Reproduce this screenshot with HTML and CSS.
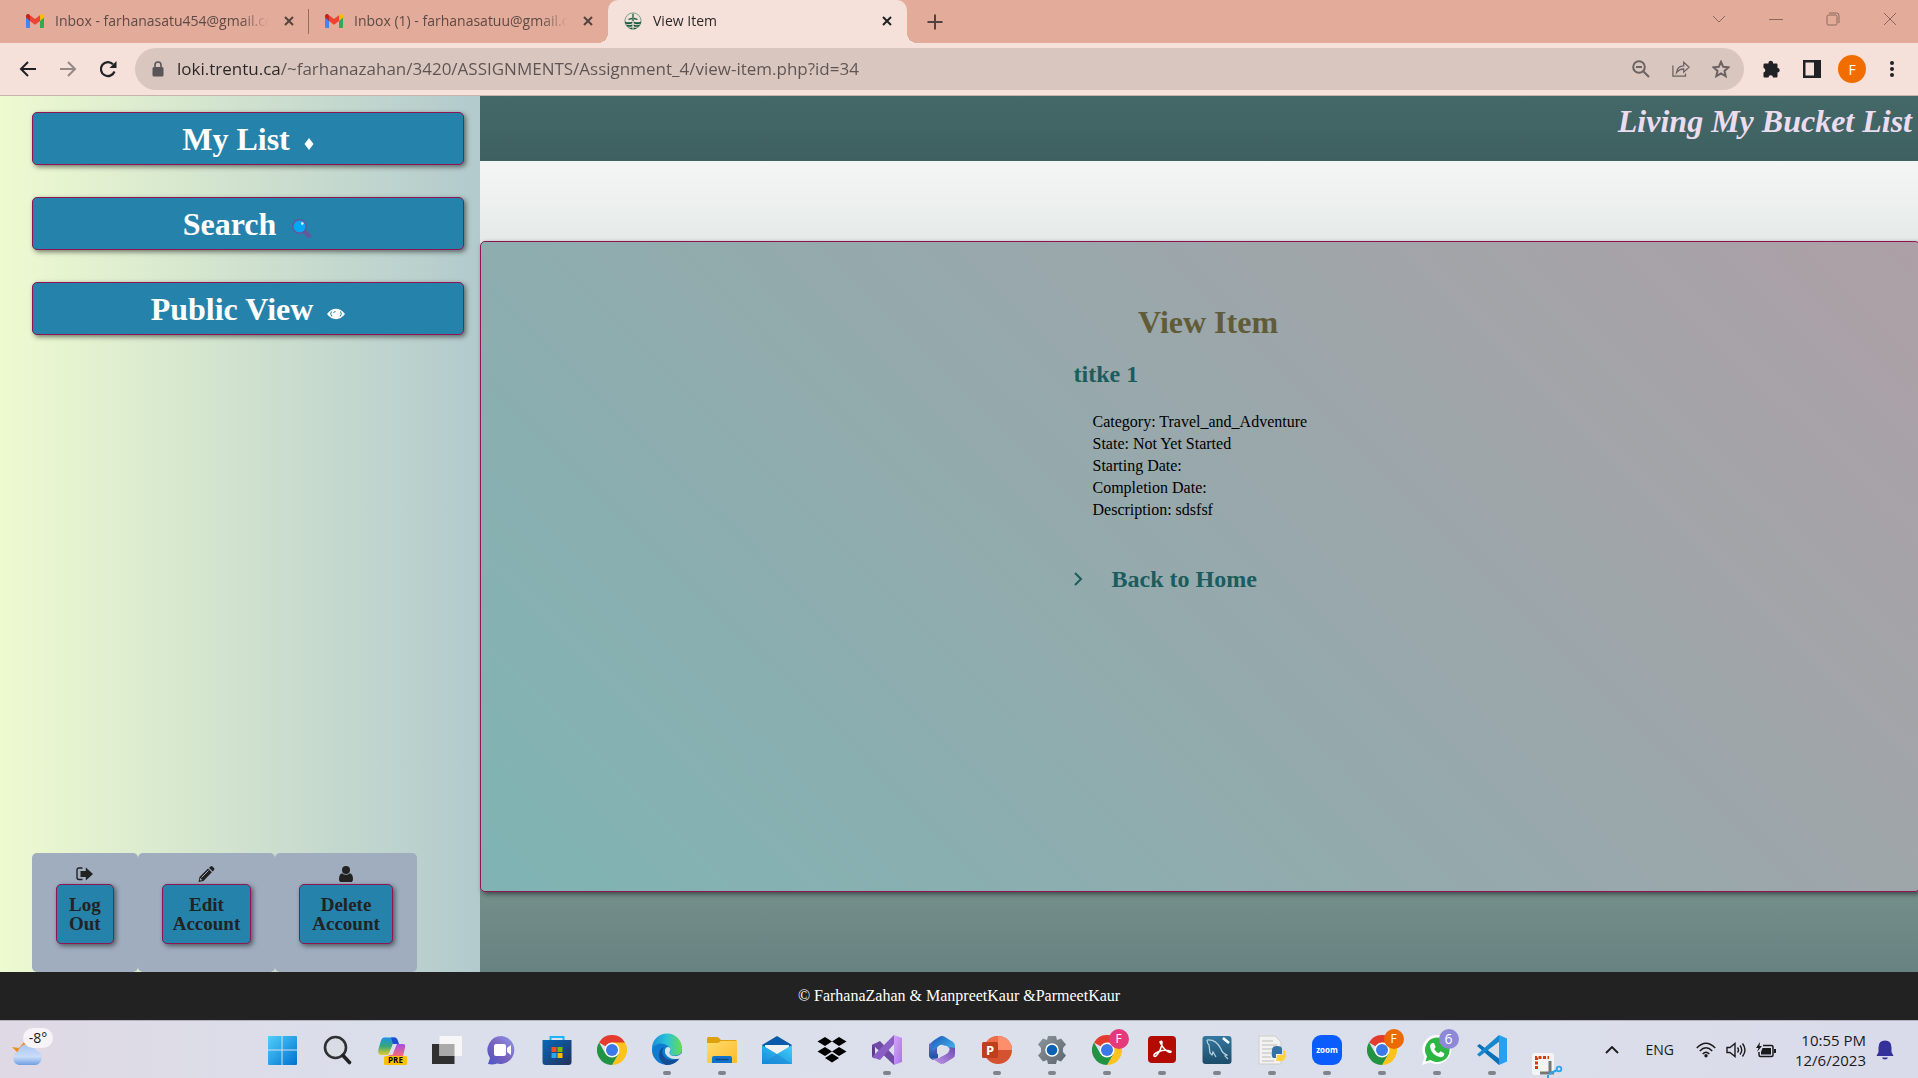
FILE: index.html
```html
<!DOCTYPE html>
<html lang="en">
<head>
<meta charset="utf-8">
<title>View Item</title>
<link rel="stylesheet" href="styles.css">
</head>
<body>
<svg class="defs" width="0" height="0" aria-hidden="true">
  <defs>
    <linearGradient id="gWin" x1="0" y1="0" x2="1" y2="1"><stop offset="0" stop-color="#4fd0fb"/><stop offset="1" stop-color="#0270d0"/></linearGradient>
    <linearGradient id="gChat" x1="0" y1="1" x2="1" y2="0"><stop offset="0" stop-color="#4b54c4"/><stop offset=".5" stop-color="#7b64bd"/><stop offset="1" stop-color="#8f9cf0"/></linearGradient>
    <linearGradient id="gStore" x1="0" y1="0" x2="1" y2="1"><stop offset="0" stop-color="#0669bb"/><stop offset="1" stop-color="#23305a"/></linearGradient>
    <linearGradient id="gEdge" x1="0" y1="0" x2="1" y2="0"><stop offset="0" stop-color="#1690d8"/><stop offset=".5" stop-color="#2cc3d6"/><stop offset="1" stop-color="#66dc50"/></linearGradient>
    <linearGradient id="gFolder" x1="0" y1="0" x2="1" y2="1"><stop offset="0" stop-color="#ffdc6c"/><stop offset="1" stop-color="#fbbb2c"/></linearGradient>
    <linearGradient id="gMail" x1="0" y1="1" x2="1" y2="0"><stop offset="0" stop-color="#1488d8"/><stop offset="1" stop-color="#42cffa"/></linearGradient>
    <linearGradient id="gCop1" x1="0" y1="0" x2="0" y2="1"><stop offset="0" stop-color="#1c90ea"/><stop offset=".5" stop-color="#35a878"/><stop offset="1" stop-color="#e8c92c"/></linearGradient>
    <linearGradient id="gCop2" x1="0" y1="0" x2="0" y2="1"><stop offset="0" stop-color="#a250e8"/><stop offset="1" stop-color="#fb6a74"/></linearGradient>
    <linearGradient id="gVs" x1="0" y1="0" x2="1" y2="1"><stop offset="0" stop-color="#d9a1ff"/><stop offset="1" stop-color="#a776e0"/></linearGradient>
    <linearGradient id="gSql" x1="0" y1="0" x2="0" y2="1"><stop offset="0" stop-color="#3578a0"/><stop offset="1" stop-color="#1c4c68"/></linearGradient>
    <linearGradient id="gGear" x1="0" y1="0" x2="1" y2="1"><stop offset="0" stop-color="#8c959b"/><stop offset="1" stop-color="#5c666e"/></linearGradient>
    <linearGradient id="gCloud" x1="0" y1="0" x2="0" y2="1"><stop offset="0" stop-color="#a9c6f4"/><stop offset=".6" stop-color="#c9dcf8"/><stop offset="1" stop-color="#6f9fe4"/></linearGradient>
    <linearGradient id="g365a" x1="0" y1="0" x2="1" y2="1"><stop offset="0" stop-color="#1a56b8"/><stop offset="1" stop-color="#4cc6f6"/></linearGradient>
    <linearGradient id="g365b" x1="0" y1="1" x2="1" y2="0"><stop offset="0" stop-color="#c39bea"/><stop offset="1" stop-color="#6d48b0"/></linearGradient>
    <linearGradient id="g365c" x1="0" y1="0" x2="0" y2="1"><stop offset="0" stop-color="#8a7ad8"/><stop offset="1" stop-color="#0f4fa0"/></linearGradient>
    <symbol id="gmail" viewBox="0 0 18 14"><path fill="#4285f4" d="M0 3v9.700c0 .7.6 1.300 1.300 1.300H4V6z"/><path fill="#34a853" d="M14 14h2.700c.7 0 1.300-.6 1.300-1.300V3l-4 3z"/><path fill="#ea4335" d="M4 7V1.200L9 5l5-3.800V7l-5 3.800z"/><path fill="#c5221f" d="M0 2v1.500L4 7V1.200L3.300.6C2 -.5 0 .4 0 2z"/><path fill="#fbbc04" d="M14 1.200V7l4-3.500V2c0-1.600-2-2.500-3.300-1.400z"/></symbol>
    <symbol id="close" viewBox="0 0 12 12"><path d="M2 2l8 8M10 2l-8 8" stroke="currentColor" stroke-width="2" fill="none"/></symbol>
    <symbol id="chrome" viewBox="0 0 30 30"><path fill="#e33b2e" d="M15 15L2 7.500A15 15 0 0 1 28 7.500z"/><path fill="#fcc31e" d="M15 7.500h13A15 15 0 0 1 15 30l6.500-11.200z"/><path fill="#229342" d="M2 7.500A15 15 0 0 0 15 30l6.500-11.200H8.500z"/><circle cx="15" cy="15" r="7.500" fill="#fff"/><circle cx="15" cy="15" r="6" fill="#3b78e8"/></symbol>
  </defs>
</svg>

<header class="browser">
  <div class="tabstrip">
    <div class="tab tab-first">
      <svg class="favicon" viewBox="0 0 18 14"><use href="#gmail"/></svg>
      <span class="tab-title">Inbox - farhanasatu454@gmail.com</span>
      <button class="tab-close" aria-label="Close tab"><svg viewBox="0 0 12 12"><use href="#close"/></svg></button>
    </div>
    <div class="tab">
      <svg class="favicon" viewBox="0 0 18 14"><use href="#gmail"/></svg>
      <span class="tab-title">Inbox (1) - farhanasatuu@gmail.com</span>
      <button class="tab-close" aria-label="Close tab"><svg viewBox="0 0 12 12"><use href="#close"/></svg></button>
    </div>
    <div class="tab tab-active">
      <svg class="favicon" viewBox="0 0 20 20"><circle cx="10" cy="10" r="9" fill="none" stroke="#6d9c85" stroke-width="1"/><path fill="#12583a" d="M9.300 2h1.400v8H9.300zM5 7.500l4-1v1.500l-4 1zM15 7.500l-4-1v1.500l4 1zM1 10.500q4 2 8.300 0v2q-4 2-8 .2zM19 10.500q-4 2-8.300 0v2q4 2 8 .2zM2.200 14q3.500 1.500 7.100 0v1.700q-2.800 1.400-5.800.3zM17.800 14q-3.500 1.500-7.100 0v1.700q2.800 1.400 5.800.3zM5 17.200q2.200.8 4.300-.2v2.500Q6.500 19 5 17.200zM15 17.200q-2.200.8-4.300-.2v2.500Q13.500 19 15 17.200z"/></svg>
      <span class="tab-title">View Item</span>
      <button class="tab-close" aria-label="Close tab"><svg viewBox="0 0 12 12"><use href="#close"/></svg></button>
    </div>
    <button class="new-tab" aria-label="New tab"><svg viewBox="0 0 16 16" width="16" height="16"><path d="M8 .5v15M.5 8h15" stroke="#4f4240" stroke-width="2"/></svg></button>
    <div class="window-buttons">
      <button aria-label="Search tabs"><svg viewBox="0 0 14 14"><path d="M1 4l6 6 6-6"/></svg></button>
      <button aria-label="Minimize"><svg viewBox="0 0 14 14"><path d="M0 7.500h14"/></svg></button>
      <button aria-label="Restore"><svg viewBox="0 0 14 14"><rect x="1" y="3" width="10" height="10" rx="1.500"/><path d="M3 1h7.500Q13 1 13 3.500V11"/></svg></button>
      <button aria-label="Close window"><svg viewBox="0 0 14 14"><path d="M1 1l12 12M13 1L1 13"/></svg></button>
    </div>
  </div>
  <div class="toolbar">
    <button class="nav-icon" aria-label="Back"><svg viewBox="0 0 18 18"><path d="M17 9H2M9 2L2 9l7 7" fill="none" stroke="#202124" stroke-width="2"/></svg></button>
    <button class="nav-icon" aria-label="Forward"><svg viewBox="0 0 18 18"><path d="M1 9h15M9 2l7 7-7 7" fill="none" stroke="#948987" stroke-width="2"/></svg></button>
    <button class="nav-icon" aria-label="Reload"><svg viewBox="0 0 18 18"><path d="M15.500 11.500A7 7 0 1 1 14 4.200" fill="none" stroke="#202124" stroke-width="2.200"/><path d="M17.500 1v7h-7z" fill="#202124"/></svg></button>
    <div class="omnibox">
      <svg class="lock" viewBox="0 0 12 16"><rect x=".5" y="6" width="11" height="9.500" rx="1.500" fill="#5a5557"/><path d="M3 6.500V4a3 3 0 0 1 6 0v2.500" fill="none" stroke="#5a5557" stroke-width="1.600"/></svg>
      <input class="url" aria-label="Address" value="loki.trentu.ca/~farhanazahan/3420/ASSIGNMENTS/Assignment_4/view-item.php?id=34">
      <button aria-label="Zoom"><svg viewBox="0 0 18 18"><circle cx="7" cy="7" r="5.800"/><path d="M4 7h6M11.500 11.500l5.500 5.500"/></svg></button>
      <button aria-label="Share"><svg viewBox="0 0 20 18"><path d="M1 5v12h14v-3" stroke-width="1.400"/><path d="M5 13q1-7.500 8-7.500V1.500l6 5.500-6 5.500V9q-5 0-8 4z" stroke-width="1.400"/></svg></button>
      <button aria-label="Bookmark"><svg viewBox="0 0 18 18"><path d="M9 1.800l2.200 5 5.300.5-4 3.600 1.200 5.300L9 13.400l-4.700 2.800 1.200-5.300-4-3.600 5.300-.5z"/></svg></button>
    </div>
    <div class="toolbar-end">
      <button aria-label="Extensions"><svg width="18" height="18" viewBox="0 0 18 18"><path fill="#202124" d="M1.500 3.500h4a2.300 2.300 0 1 1 4.500 0h3.500q1 0 1 1V8a2.200 2.200 0 1 1 0 4.400V16.500q0 1-1 1H10a2.200 2.200 0 0 0-4.500 0h-4q-1 0-1-1v-4a2.300 2.300 0 0 0 0-4.500V4.500q0-1 1-1z"/></svg></button>
      <button aria-label="Side panel"><svg width="18" height="18" viewBox="0 0 18 18"><path fill="#202124" fill-rule="evenodd" d="M0 0h18v18H0zM2.500 2.500v13H11v-13z"/></svg></button>
      <button class="avatar" aria-label="Profile">F</button>
      <button aria-label="Menu"><svg width="18" height="18" viewBox="0 0 18 18"><g fill="#202124"><circle cx="9" cy="3" r="2"/><circle cx="9" cy="9" r="2"/><circle cx="9" cy="15" r="2"/></g></svg></button>
    </div>
  </div>
</header>

<div class="page">
  <aside class="sidebar">
    <nav class="main-nav">
      <a href="#list">My List <svg width="10" height="12" viewBox="0 0 10 12"><path fill="#fff" d="M5 0l4.500 6L5 12 .5 6z"/></svg></a>
      <a href="#search" class="wide-gap">Search <svg width="19" height="19" viewBox="0 0 19 19"><path d="M12 12l5 5" stroke="#6a559c" stroke-width="4" stroke-linecap="round"/><circle cx="7.500" cy="7.500" r="6.700" fill="#00a8f3" stroke="#6a559c" stroke-width="1.400"/><circle cx="10.300" cy="4.500" r="1.300" fill="#fff"/></svg></a>
      <a href="#public">Public View <svg width="18" height="12" viewBox="0 0 18 12"><path fill="#fff" d="M0 6Q4 .8 9 .8T18 6q-4 5.200-9 5.200T0 6z"/><path d="M4.500 3.500Q2.500 6 5 8.500M13.500 3.500Q15.500 6 13 8.500M6.500 5Q7 3.500 8.500 3.500" fill="none" stroke="#2583ab"/></svg></a>
    </nav>
    <div class="account">
      <div class="account-cell">
        <svg width="17" height="16" viewBox="0 0 17 16"><path d="M6.500 2H3Q1 2 1 4v7.500q0 2 2 2h3.500" fill="none" stroke="#222" stroke-width="1.400"/><path fill="#222" d="M4.500 5h5.300V1.500L17 8l-7.200 6.500V11H4.500z"/></svg>
        <a href="#logout">Log<br>Out</a>
      </div>
      <div class="account-cell account-edit">
        <svg width="17" height="16" viewBox="0 0 17 16"><path fill="#222" d="M.5 16l1-5L10 2.500 13.800 6.300 5.500 15zM11 1.700L12.500.5q1-.8 2 0l1.500 1.600q.8 1 0 2L14.700 5.400z"/><path d="M3.500 11.500l7-7" stroke="#9fadbf"/><path fill="#9fadbf" d="M2.200 12l2 2-1.800.5-.6-.6z"/></svg>
        <a href="#edit">Edit<br>Account</a>
      </div>
      <div class="account-cell">
        <svg width="14" height="16" viewBox="0 0 14 16"><circle cx="7" cy="4" r="4" fill="#222"/><path fill="#222" d="M3 7.200q4 3 8 0 3 1 3 6 0 2.800-2.500 2.800h-9Q0 16 0 13.200q0-5 3-6z"/></svg>
        <a href="#delete">Delete<br>Account</a>
      </div>
    </div>
  </aside>
  <div class="content">
    <div class="site-title">Living My Bucket List</div>
    <main class="backdrop">
      <section class="panel">
        <div class="item">
          <h1>View Item</h1>
          <h2>titke 1</h2>
          <ul>
            <li>Category: Travel_and_Adventure</li>
            <li>State: Not Yet Started</li>
            <li>Starting Date:</li>
            <li>Completion Date:</li>
            <li>Description: sdsfsf</li>
          </ul>
          <a class="back" href="#home"><svg width="10" height="16" viewBox="0 0 10 16"><path d="M1 2l6 6-6 6" fill="none" stroke="#1b5c5f" stroke-width="2"/></svg>Back to Home</a>
        </div>
      </section>
    </main>
  </div>
</div>
<footer class="site-footer">© FarhanaZahan &amp; ManpreetKaur &amp;ParmeetKaur</footer>

<div class="taskbar">
  <div class="weather">
    <svg width="32" height="36" viewBox="0 0 32 36"><path fill="#f28c1e" d="M0 17l7 1L12 12l6 8-12 3z"/><path fill="url(#gCloud)" d="M7 35a7 7 0 0 1-1-13.500 9.500 9.500 0 0 1 18-1 7.500 7.500 0 0 1 0 14.500z"/></svg>
    <span class="temp">-8°</span>
  </div>
  <div class="apps">
    <button aria-label="Start"><svg viewBox="0 0 30 30"><path fill="url(#gWin)" d="M1 2q0-1 1-1h12.500v13.500H1zM15.500 1H29q1 0 1 1v12.500H15.500zM1 15.500h13.500V30H2q-1 0-1-1zM15.500 15.500H30V29q0 1-1 1H15.500z"/></svg></button>
    <button aria-label="Search"><svg viewBox="0 0 30 30"><circle cx="13.500" cy="12.500" r="10.500" fill="#d8dce4" stroke="#303030" stroke-width="2.600"/><path d="M21 20.500l6.500 7" stroke="#222" stroke-width="3.600" stroke-linecap="round"/></svg></button>
    <button aria-label="Copilot"><svg viewBox="0 0 30 30"><path fill="url(#gCop1)" d="M7 2.500h11L12 20H5q-5 0-3.500-6L4 5.500Q5 2.500 7 2.500z"/><path fill="#1b4fd0" d="M14 2.500h4q2 0 3 3.500l1 3h-6z"/><path fill="url(#gCop2)" d="M20 9h6q3 0 2 4l-2 8H11l4-3z"/><path fill="#dbe0eb" d="M16 9.500h3.500L15.500 20H11z"/><rect x="7" y="21" width="23" height="9" rx="1.500" fill="#fcc200"/><text x="18.500" y="28.300" class="pre">PRE</text></svg></button>
    <button aria-label="Task view"><svg viewBox="0 0 30 30"><path fill="#303030" d="M0 9h22.500v20H0z"/><path fill="#f6f6f6" d="M7.500 1H30v20H7.500z"/><path fill="#aaa" d="M7.500 9h15v12h-15z"/></svg></button>
    <button aria-label="Chat"><svg viewBox="0 0 30 30"><path fill="url(#gChat)" d="M15 1a14 14 0 1 1-5 27.500Q6 30 1 29l2-6A14 14 0 0 1 15 1z"/><rect x="7" y="9" width="12" height="12" rx="2" fill="#fff"/><path fill="#fff" d="M20 13l4-3v10l-4-3z"/></svg></button>
    <button aria-label="Microsoft Store"><svg viewBox="0 0 30 30"><path d="M8.500 6V2h13v4" fill="none" stroke="#1cb4f4" stroke-width="2"/><path fill="url(#gStore)" d="M.5 5h29v22q0 3-3 3h-23q-3 0-3-3z"/><path fill="#f25022" d="M9.500 12H14.500v5h-5z"/><path fill="#7fba00" d="M15.500 12h5v5h-5z"/><path fill="#29a9ea" d="M9.500 18h5v5h-5z"/><path fill="#ffb900" d="M15.500 18h5v5h-5z"/></svg></button>
    <button aria-label="Chrome"><svg viewBox="0 0 30 30"><use href="#chrome"/></svg></button>
    <button class="running" aria-label="Edge"><svg viewBox="0 0 30 30"><circle cx="15" cy="15" r="15" fill="#0c7bd0"/><path fill="url(#gEdge)" d="M0 13A15 15 0 0 1 30 14q0 6.500-7 6.500-6 0-5-3 1.500-3-2-6.500Q8 5 0 13z"/><path fill="#134d94" d="M10 16q1 9 10 9 4 0 8-2.500-5 8-14 7.500Q7 27 7 20q0-6 5-8z"/><path fill="#dbe0eb" d="M13 14.500q2-4 5-1.500 1 2-.5 4.500 0 3.500 6 3.500 4 0 6-3l.5 3-2 2.500Q17 26 13 18z"/></svg></button>
    <button class="running" aria-label="File Explorer"><svg viewBox="0 0 30 30"><path fill="#dfa00c" d="M0 3.500Q0 2 1.500 2H10q1 0 2 1l2 2h14.500Q30 5 30 6.500V14H0z"/><path fill="url(#gFolder)" d="M0 8h11l3-2h16v21q0 1-1 1H1q-1 0-1-1z"/><path fill="#1073c8" d="M5 28v-5q0-2 2-2h16q2 0 2 2v5z"/><path d="M8.500 24.500h13" stroke="#0a4684" stroke-width="1.400"/></svg></button>
    <button aria-label="Mail"><svg viewBox="0 0 30 30"><path fill="#0a5cab" d="M0 10L15 1l15 9v10H0z"/><path fill="#f1f1f1" d="M3 10h24v9H3z"/><path fill="url(#gMail)" d="M0 10l15 9 15-9v19H0z"/><path fill="#1b86d4" opacity=".5" d="M15 19L30 29H0z"/></svg></button>
    <button aria-label="Dropbox"><svg viewBox="0 0 30 30"><path d="M8 2l7 4.500L8 11 .5 6.500zM22 2l7.500 4.500L22 11l-7-4.500zM8 12l7 4.500L8 21 .5 16.500zM22 12l7.500 4.500L22 21l-7-4.500zM15 18.500l7 4.500-7 4.500L8 23z"/></svg></button>
    <button class="running" aria-label="Visual Studio"><svg viewBox="0 0 30 30"><path fill="#5c3a8c" d="M0 10l3-1.500v15L0 22z"/><path fill="#6f4ba6" d="M0 10l8-4 14 15v9L3 12v3z"/><path fill="#8a5dc4" d="M0 22l3-3L22 0v9L8 25z"/><path fill="url(#gVs)" d="M22 0l8 3v24l-8 3z"/></svg></button>
    <button aria-label="Microsoft 365"><svg viewBox="0 0 30 30"><path fill="url(#g365c)" d="M2 9l9-6v20l-5 2-3-2q-1-1-1-3z"/><path fill="url(#g365a)" d="M12 2q3-2 6 0l8 5q2 1.500 2 4v9l-8-9-7-1-8 6q-2-7 1-10z"/><path fill="url(#g365b)" d="M28 13v6q0 3-2 4l-8 5q-3 2-6 0l-7-4.500q8 .5 10-2.500l6-3q2-3 2-6z"/><path fill="#dbe0eb" d="M15 9.500l5 3v6l-5 3-5-3v-6z"/></svg></button>
    <button class="running" aria-label="PowerPoint"><svg viewBox="0 0 30 30"><circle cx="16" cy="15" r="14" fill="#d45230"/><path fill="#ed6c47" d="M16 1v14H2A14 14 0 0 1 16 1z"/><path fill="#ff8f6b" d="M16 1a14 14 0 0 1 14 14H16z"/><rect x="0" y="7" width="16" height="16" rx="1.500" fill="#bf3e1e"/><text x="8" y="19.500" class="ppt">P</text></svg></button>
    <button class="running" aria-label="Settings"><svg viewBox="0 0 30 30"><path fill="url(#gGear)" d="M11 1h8l1 4 4-1.500 5 6-3 3.500v4l3 3.500-5 6-4-1.500-1 4h-8l-1-4-4 1.500-5-6L4 17v-4L1 9.500l5-6L10 5z"/><circle cx="15" cy="15" r="6.800" fill="#fff"/><circle cx="15" cy="15" r="5.300" fill="#0a62b4"/></svg></button>
    <button class="running" aria-label="Chrome profile"><svg viewBox="0 0 30 30"><use href="#chrome"/></svg><span class="badge badge-pink">F</span></button>
    <button class="running" aria-label="Acrobat"><svg viewBox="0 0 30 30"><rect x="1" y="1" width="28" height="27" rx="4" fill="#b30b00"/><path d="M7 21q-1-2 5-4.500t12 0q0 2-4-.5T13 7q2-2 2 1-1 8-6 13-1 1-2 0z" fill="none" stroke="#fff" stroke-width="1.600"/></svg></button>
    <button class="running" aria-label="MySQL Workbench"><svg viewBox="0 0 30 30"><rect x=".5" y="1" width="29" height="28" rx="3" fill="url(#gSql)"/><path d="M5 5q9-1 14 9 1 4 6 6l-2 1 3 3M5 5q0 3 2 5l1 8 2 2 1-3 3 5" fill="none" stroke="#b9d2de" stroke-width="1.200"/><path d="M21 3l6 5" stroke="#fff" stroke-width="2.600"/></svg></button>
    <button class="running" aria-label="Python"><svg viewBox="0 0 30 30"><path fill="#f2f2f0" stroke="#ccc" d="M2 1h16l6 6v22H2z"/><path d="M5 6h11M5 10h15M5 14h10M5 18h9M5 22h9M5 26h12" stroke="#bbb"/><path fill="#3572a5" d="M15 15q0-4 5-4t5 3v5h-6v4h-3q-2-2-1-8z"/><path fill="#ffd23c" d="M20 20h6v-5q3 0 3 5t-4 6h-6z"/></svg></button>
    <button class="running" aria-label="Zoom"><svg viewBox="0 0 30 30"><rect width="30" height="30" rx="9" fill="#0b5cff"/><text x="15" y="17.500" class="zoom">zoom</text></svg></button>
    <button class="running" aria-label="Chrome second profile"><svg viewBox="0 0 30 30"><use href="#chrome"/></svg><span class="badge badge-orange">F</span></button>
    <button class="running" aria-label="WhatsApp"><svg viewBox="0 0 30 30"><path fill="#fff" d="M15 0a14.500 14.500 0 1 1-7 27.300L0 30l2.500-8A14.500 14.500 0 0 1 15 0z"/><path fill="#2cb742" d="M15 2.500A12.300 12.300 0 1 1 8.500 25L3.500 26.500 5 21.500A12.300 12.300 0 0 1 15 2.500z"/><path fill="#fff" d="M10 8h2l1.700 4-1.500 2q1.500 3 4.600 4.300l1.700-2 3.700 1.900q.2 3.800-3.700 4Q9.500 20 8 12q0-3 2-4z"/></svg><span class="badge badge-violet">6</span></button>
    <button class="running" aria-label="VS Code"><svg viewBox="0 0 30 30"><path fill="#0a70b8" d="M0 11l2.500-2L24 25l-2 5z"/><path fill="#1587cf" d="M0 19.500l2.500 2L23 6l-1-6z"/><path fill="#25a1ee" d="M22 0l8 3.500v23L22 30z"/></svg></button>
    <button class="snip" aria-label="Snipping Tool"><svg viewBox="0 0 30 30"><rect width="22" height="22" rx="2" fill="#f4f4f4"/><path d="M4.500 16V4.500H17" fill="none" stroke="#d83b01" stroke-width="3" stroke-dasharray="3 1.500"/><path d="M18 8v13M8 20h14" stroke="#777" stroke-width="3"/><circle cx="27" cy="16" r="2.300" fill="none" stroke="#2aa5ea" stroke-width="1.800"/><path d="M25 17l-8 4M16 22v6" stroke="#2aa5ea" stroke-width="2"/></svg></button>
  </div>
  <div class="tray">
    <button aria-label="Show hidden icons"><svg width="14" height="8" viewBox="0 0 14 8"><path d="M1 7l6-6 6 6" fill="none" stroke="#1a1a1a" stroke-width="1.800"/></svg></button>
    <span class="lang">ENG</span>
    <div class="status">
      <svg width="20" height="16" viewBox="0 0 20 16"><g fill="none" stroke="#1a1a1a" stroke-width="1.500"><path d="M.8 6Q10-3.500 19.200 6M3.800 9Q10 2.500 16.200 9M6.700 12Q10 8.500 13.300 12"/></g><circle cx="10" cy="13.700" r="1.700" fill="#1a1a1a"/></svg>
      <svg width="20" height="16" viewBox="0 0 20 16"><g fill="none" stroke="#1a1a1a" stroke-width="1.400"><path d="M1 5.500h3L9 1.500v13l-5-4H1zM11.500 5.500q2 2.500 0 5M14 3.500q3.500 4.500 0 9M16.500 1.500q5 6.500 0 13"/></g></svg>
      <svg width="20" height="16" viewBox="0 0 20 16"><path d="M7 3.500h8.500Q17 3.500 17 5v8q0 1.500-1.500 1.500h-11Q3 14.500 3 13v-3" fill="none" stroke="#1a1a1a" stroke-width="1.500"/><path fill="#1a1a1a" d="M6.500 6H15v6.500H5V10zM18 7h2v4h-2zM4 0L0 6h2.500L1 10l5-6H3.500z"/></svg>
    </div>
    <div class="clock"><time>10:55 PM</time><time>12/6/2023</time></div>
    <svg width="18" height="20" viewBox="0 0 18 20"><path fill="#35319b" d="M9 .5q6.500 0 6.500 7V12l2 4H.5l2-4V7.500q0-7 6.500-7zM6 17.500h6q-.5 2-3 2t-3-2z"/></svg>
  </div>
</div>
</body>
</html>
```
FILE: styles.css
```css
* { box-sizing: border-box; }

body {
  margin: 0;
  min-height: 100vh;
  display: flex;
  flex-direction: column;
  overflow: hidden;
  font-family: "Liberation Serif", "Times New Roman", serif;
  font-size: 16px;
  color: #000;
}

button {
  display: flex;
  align-items: center;
  justify-content: center;
  padding: 0;
  border: 0;
  background: none;
  font: inherit;
}

svg { display: block; flex: none; }
.defs { position: absolute; }

h1, h2, ul { margin: 0; padding: 0; }

/* Browser chrome */
.browser { font-family: "Open Sans", "Segoe UI", sans-serif; }

.tabstrip {
  display: flex;
  height: 43px;
  padding-left: 10px;
  background: #e3ab99;
}

.tab {
  position: relative;
  display: flex;
  align-items: center;
  width: 299px;
  padding: 0 14px 2px 16px;
  color: #5e4a46;
  font-size: 14px;
}

.tab-first::after {
  content: "";
  position: absolute;
  right: 0;
  top: 9px;
  width: 1px;
  height: 25px;
  background: #8e6e65;
}

.favicon { width: 18px; height: 18px; }

.tab-title {
  flex: 1;
  margin: 0 14px 0 11px;
  overflow: hidden;
  white-space: nowrap;
  mask-image: linear-gradient(to left, transparent, #000 28px);
}

.tab-close { width: 12px; height: 12px; color: #55433f; }
.tab-close svg { width: 12px; height: 12px; }

.tab-active {
  background: #f5e0da;
  border-radius: 10px 10px 0 0;
  color: #2c2827;
}
.tab-active .tab-close { color: #202124; }

.tab-active::before,
.tab-active::after {
  content: "";
  position: absolute;
  bottom: 0;
  width: 10px;
  height: 10px;
}
.tab-active::before { right: 100%; background: radial-gradient(circle at 0 0, #e3ab99 10px, #f5e0da 10px); }
.tab-active::after { left: 100%; background: radial-gradient(circle at 100% 0, #e3ab99 10px, #f5e0da 10px); }

.new-tab { width: 56px; }

.window-buttons {
  display: flex;
  margin-left: auto;
  padding-bottom: 6px;
}
.window-buttons button { width: 57px; }
.window-buttons svg { width: 14px; height: 14px; fill: none; stroke: #8b685f; stroke-width: 1; }

.toolbar {
  display: flex;
  align-items: center;
  height: 53px;
  padding: 0 6px 0 8px;
  background: #f5e0da;
  border-bottom: 1px solid #c9b3ad;
}

.nav-icon { width: 40px; height: 40px; }
.nav-icon svg { width: 18px; height: 18px; }

.omnibox {
  flex: 1;
  display: flex;
  align-items: center;
  height: 42px;
  margin-left: 7px;
  padding: 0 3px 0 17px;
  border-radius: 21px;
  background: #d8c6bf;
}
.omnibox button { width: 40px; height: 40px; }
.omnibox button svg { width: 18px; height: 18px; fill: none; stroke: #6b6261; stroke-width: 2; }
.omnibox .lock { width: 12px; height: 16px; }

.url {
  flex: 1;
  margin-left: 13px;
  padding: 0;
  border: 0;
  outline: 0;
  font: 17px/24px "Open Sans", "Segoe UI", sans-serif;
  color: transparent;
  background: linear-gradient(to right, #2b2626 104px, #5d5353 104px);
  background-clip: text;
}

.toolbar-end { display: flex; align-items: center; padding-left: 8px; }
.toolbar-end button { width: 40px; height: 40px; }
.toolbar-end .avatar {
  width: 28px;
  height: 28px;
  margin: 0 6px;
  border-radius: 50%;
  background: #f16d00;
  color: #fff;
  font-size: 14px;
}

/* Site */
.page { flex: 1; display: flex; }

.sidebar {
  display: flex;
  flex-direction: column;
  justify-content: space-between;
  width: 480px;
  padding: 16px 16px 0 32px;
  background: linear-gradient(to right, #eefad0, #b2cacd);
}

.main-nav { display: grid; gap: 32px; }
.main-nav a,
.account a {
  border: 1px solid #8f1553;
  border-radius: 5px;
  background: #2583ab;
  box-shadow: 2px 2px 5px rgba(0, 0, 0, .5);
  font-weight: bold;
  text-align: center;
  text-decoration: none;
}
.main-nav a {
  display: flex;
  align-items: center;
  justify-content: center;
  gap: 14px;
  height: 53px;
  padding-top: 2px;
  color: #fff;
  font-size: 32px;
}
.main-nav .wide-gap { gap: 16px; padding-right: 2px; }
.main-nav svg { margin-top: 8px; }

.account { display: flex; }
.account-cell {
  display: flex;
  flex-direction: column;
  align-items: center;
  gap: 2px;
  padding: 13px 24px 28px;
  border-radius: 5px;
  background: #9fadbf;
}
.account a {
  padding: 10px 12px;
  color: #222;
  font-size: 19px;
  line-height: 19px;
}
.account .account-edit a { padding: 10px; }

.content { flex: 1; display: flex; flex-direction: column; }

.site-title {
  height: 65px;
  padding: 6px;
  background: linear-gradient(#446868, #3e6060);
  color: #ebdcf0;
  font-size: 32px;
  font-style: italic;
  font-weight: bold;
  line-height: 38px;
  text-align: right;
}

.backdrop {
  flex: 1;
  display: flex;
  padding: 80px 0;
  background: linear-gradient(#f4f6f6, #e5eae8 80px, #748e8a 732px, #678281);
}

.panel {
  flex: 1;
  display: flex;
  justify-content: center;
  margin-right: -2px;
  padding: 62px 0 62px 16px;
  border: 1px solid #8f1553;
  border-radius: 5px;
  background: linear-gradient(45deg, #7fb4b4, #96a9ac 50%, #ada0a6);
  box-shadow: 2px 2px 5px rgba(0, 0, 0, .5);
}

.item { width: 269px; }
.item h1 { color: #615c38; font-size: 32px; line-height: 36px; text-align: center; }
.item h2 { margin: 20px 0 23px; color: #1b5c5f; font-size: 24px; line-height: 28px; }
.item ul { margin-bottom: 44px; padding-left: 19px; list-style: none; line-height: 22px; }

.back {
  display: flex;
  align-items: center;
  gap: 28px;
  color: #1b5c5f;
  font-size: 24px;
  font-weight: bold;
  line-height: 28px;
  text-decoration: none;
}

.site-footer {
  background: #222;
  color: #fff;
  line-height: 48px;
  text-align: center;
}

/* Taskbar */
.taskbar {
  display: flex;
  align-items: center;
  height: 58px;
  border-top: 1px solid #b5b3c0;
  background: linear-gradient(to right, #dfd9e4, #dadfeb 20%, #dbe0eb 60%, #dadbea);
  color: #1a1a1a;
  font-family: "Open Sans", "Segoe UI", sans-serif;
}

.weather { position: relative; flex: 1; padding: 0 0 3px 12px; }
.temp {
  position: absolute;
  left: 23px;
  top: -2px;
  width: 30px;
  border-radius: 10px;
  background: #f6f4f8;
  font-size: 14px;
  line-height: 20px;
  text-align: center;
}

.apps { display: flex; height: 100%; margin-right: 20px; }
.apps button { position: relative; width: 55px; padding-top: 14px; align-items: flex-start; }
.apps svg { width: 30px; height: 30px; overflow: visible; }
.apps .snip { padding-top: 32px; }

.running::after {
  content: "";
  position: absolute;
  bottom: 3px;
  width: 8px;
  height: 4px;
  border-radius: 2px;
  background: #808389;
}

.badge {
  position: absolute;
  right: 6px;
  top: 8px;
  width: 20px;
  height: 20px;
  border-radius: 50%;
  color: #fff;
  font-size: 12px;
  line-height: 20px;
  text-align: center;
}
.badge-pink { background: #e5397c; }
.badge-orange { background: #ec6a04; }
.badge-violet { background: #8d89d6; font-size: 14px; }

.pre { font: bold 8px "Open Sans", sans-serif; text-anchor: middle; }
.ppt { font: bold 13px "Open Sans", sans-serif; text-anchor: middle; fill: #fff; }
.zoom { font: bold 8px "Open Sans", sans-serif; text-anchor: middle; fill: #fff; }

.tray {
  display: flex;
  align-items: center;
  padding-right: 24px;
}
.tray button { width: 34px; height: 40px; margin-right: 17px; }
.lang { margin-right: 22px; font-size: 14px; }
.status { display: flex; gap: 10px; }
.clock {
  display: grid;
  width: 90px;
  margin-right: 10px;
  font-size: 15px;
  line-height: 20px;
  text-align: right;
}
```
